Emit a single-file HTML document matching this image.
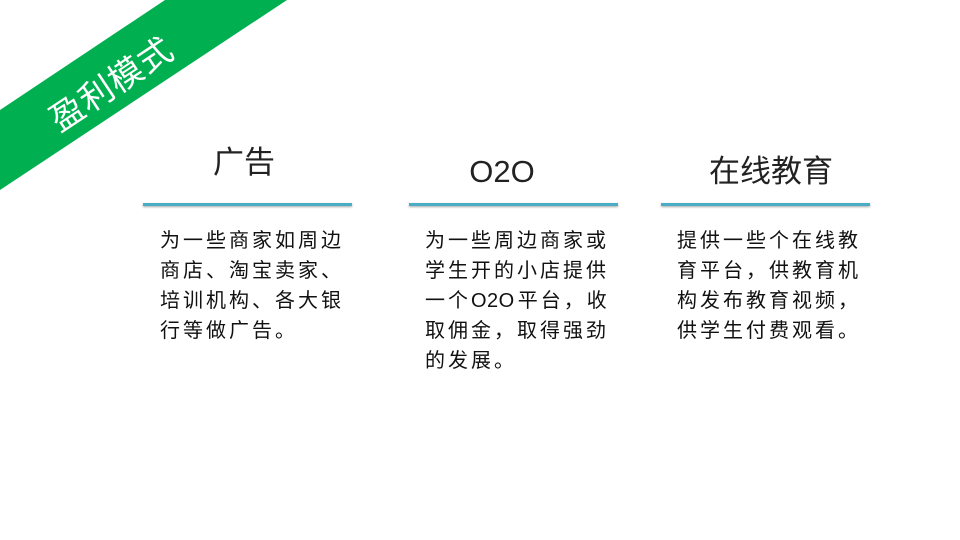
<!DOCTYPE html>
<html><head><meta charset="utf-8"><style>
body{margin:0;width:960px;height:540px;overflow:hidden;background:#fff;position:relative;font-family:"Liberation Sans","Noto Sans CJK SC",sans-serif;color:#111}
.band{position:absolute;left:0;top:0}
.bt{position:absolute;left:110px;top:82px;transform:translate(-50%,-50%) rotate(-33.5deg);color:#fff;font-size:34px;white-space:nowrap;letter-spacing:1px}
.h{position:absolute;font-size:31px;color:#222;text-align:center;width:220px;line-height:40px}
.line{position:absolute;height:3px;background:#4bacc6;top:203px;box-shadow:0 1px 2px rgba(0,0,0,.35)}
.p{position:absolute;top:226px;font-size:20px;line-height:30px;width:240px;letter-spacing:3px;white-space:nowrap}
.p span{letter-spacing:0.5px;margin-right:3px}
</style></head><body>
<svg class="band" width="300" height="200"><polygon points="165,0 287,0 0,190 0,110" fill="#00b050"/></svg>
<div class="bt">盈利模式</div>
<div class="h" style="left:134px;top:143px">广告</div>
<div class="h" style="left:392px;top:152px">O2O</div>
<div class="h" style="left:661px;top:152px">在线教育</div>
<div class="line" style="left:143px;width:209px"></div>
<div class="line" style="left:409px;width:209px"></div>
<div class="line" style="left:661px;width:209px"></div>
<div class="p" style="left:160px">为一些商家如周边<br>商店、淘宝卖家、<br>培训机构、各大银<br>行等做广告。</div>
<div class="p" style="left:425px">为一些周边商家或<br>学生开的小店提供<br>一个<span>O2O</span>平台，收<br>取佣金，取得强劲<br>的发展。</div>
<div class="p" style="left:677px">提供一些个在线教<br>育平台，供教育机<br>构发布教育视频，<br>供学生付费观看。</div>
</body></html>
